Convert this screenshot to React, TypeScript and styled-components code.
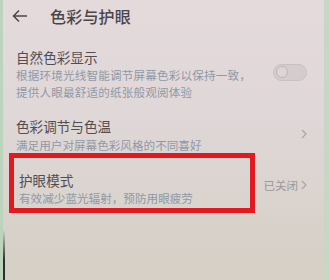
import React from 'react';
import styled, { createGlobalStyle } from 'styled-components';

const GlobalStyle = createGlobalStyle`
    html, body {
        margin: 0;
        padding: 0;
    }
    body {
        width: 329px;
        height: 280px;
        overflow: hidden;
        font-family: "Noto Sans CJK SC", "Noto Sans", sans-serif;
    }
`;

const Screen = styled.div`
    width: 329px;
    height: 280px;
    box-sizing: border-box;
    background: linear-gradient(180deg, #e4dadc 0%, #e0d7d8 40%, #dbd4d0 65%, #d6cfc5 100%);
    border-left: 3px solid #bcd3bc;
    border-right: 5px solid #c6d8c4;
    position: relative;
    overflow: hidden;
`;

const Bezel = styled.div`
    position: absolute;
    left: -3px;
    bottom: 0;
    width: 5px;
    height: 50px;
    background: linear-gradient(180deg, rgba(40, 50, 40, 0) 0%, #2a332a 60%);
`;

const Header = styled.header`
    height: 32px;
    display: flex;
    align-items: center;
    padding-left: 9px;
`;

const BackButton = styled.div`
    width: 16px;
    height: 14px;
    display: flex;
    align-items: center;
    margin-right: 22px;
`;

const PageTitle = styled.h1`
    margin: 0;
    font-size: 16px;
    font-weight: 500;
    color: #4a4647;
    letter-spacing: 0.2px;
`;

const Row = styled.div<{ $top: number }>`
    display: flex;
    align-items: center;
    justify-content: space-between;
    margin-top: ${p => p.$top}px;
    padding: 0 17px 0 13px;
`;

const TextBlock = styled.div`
    display: flex;
    flex-direction: column;
`;

const Highlight = styled.div`
    width: 246px;
    box-sizing: border-box;
    margin-left: -7px;
    border: 5px solid #e3191f;
    padding: 12px 0 2px 5px;
    display: flex;
    flex-direction: column;
`;

const RowTitle = styled.div`
    font-size: 13.6px;
    line-height: 20px;
    color: #524e4f;
`;

const RowDesc = styled.div<{ $gap: number }>`
    margin-top: ${p => p.$gap}px;
    font-size: 11.6px;
    line-height: 15px;
    color: #8f99a6;
    white-space: nowrap;
`;

const DescLine = styled.div`
    line-height: 16.8px;
    letter-spacing: 0.15px;
`;

const Toggle = styled.div`
    width: 34px;
    height: 17px;
    box-sizing: border-box;
    border-radius: 9px;
    background: #d4cccd;
    border: 1px solid #c8c0c1;
    display: flex;
    align-items: center;
    padding-left: 2px;
    margin-top: -3px;
`;

const Knob = styled.div`
    width: 12px;
    height: 12px;
    box-sizing: border-box;
    border-radius: 50%;
    background: #ddd5d6;
    border: 1px solid #bdb5b6;
`;

const Side = styled.div`
    display: flex;
    align-items: center;
    gap: 3px;
    padding-top: 5px;
    font-size: 11.5px;
    color: #9c9899;
`;

const Chevron = () => (
    <svg width="6" height="10" viewBox="0 0 6 10">
        <path d="M1 1 L5 5 L1 9" fill="none" stroke="#aaa5a6" strokeWidth="1.2" />
    </svg>
);

export default function App() {
    return (
        <>
            <GlobalStyle />
            <Screen>
                <Header>
                    <BackButton>
                        <svg width="16" height="14" viewBox="0 0 16 14">
                            <path d="M15 7 H2 M7 1.5 L1.5 7 L7 12.5" fill="none" stroke="#4a4647" strokeWidth="1.5" />
                        </svg>
                    </BackButton>
                    <PageTitle>色彩与护眼</PageTitle>
                </Header>

                <Row $top={15}>
                    <TextBlock>
                        <RowTitle>自然色彩显示</RowTitle>
                        <RowDesc $gap={0}>
                            <DescLine>根据环境光线智能调节屏幕色彩以保持一致，</DescLine>
                            <DescLine>提供人眼最舒适的纸张般观阅体验</DescLine>
                        </RowDesc>
                    </TextBlock>
                    <Toggle>
                        <Knob />
                    </Toggle>
                </Row>

                <Row $top={15}>
                    <TextBlock>
                        <RowTitle>色彩调节与色温</RowTitle>
                        <RowDesc $gap={2}>满足用户对屏幕色彩风格的不同喜好</RowDesc>
                    </TextBlock>
                    <Chevron />
                </Row>

                <Row $top={0}>
                    <Highlight>
                        <RowTitle>护眼模式</RowTitle>
                        <RowDesc $gap={1}>有效减少蓝光辐射，预防用眼疲劳</RowDesc>
                    </Highlight>
                    <Side>
                        已关闭
                        <Chevron />
                    </Side>
                </Row>
                <Bezel />
            </Screen>
        </>
    );
}
